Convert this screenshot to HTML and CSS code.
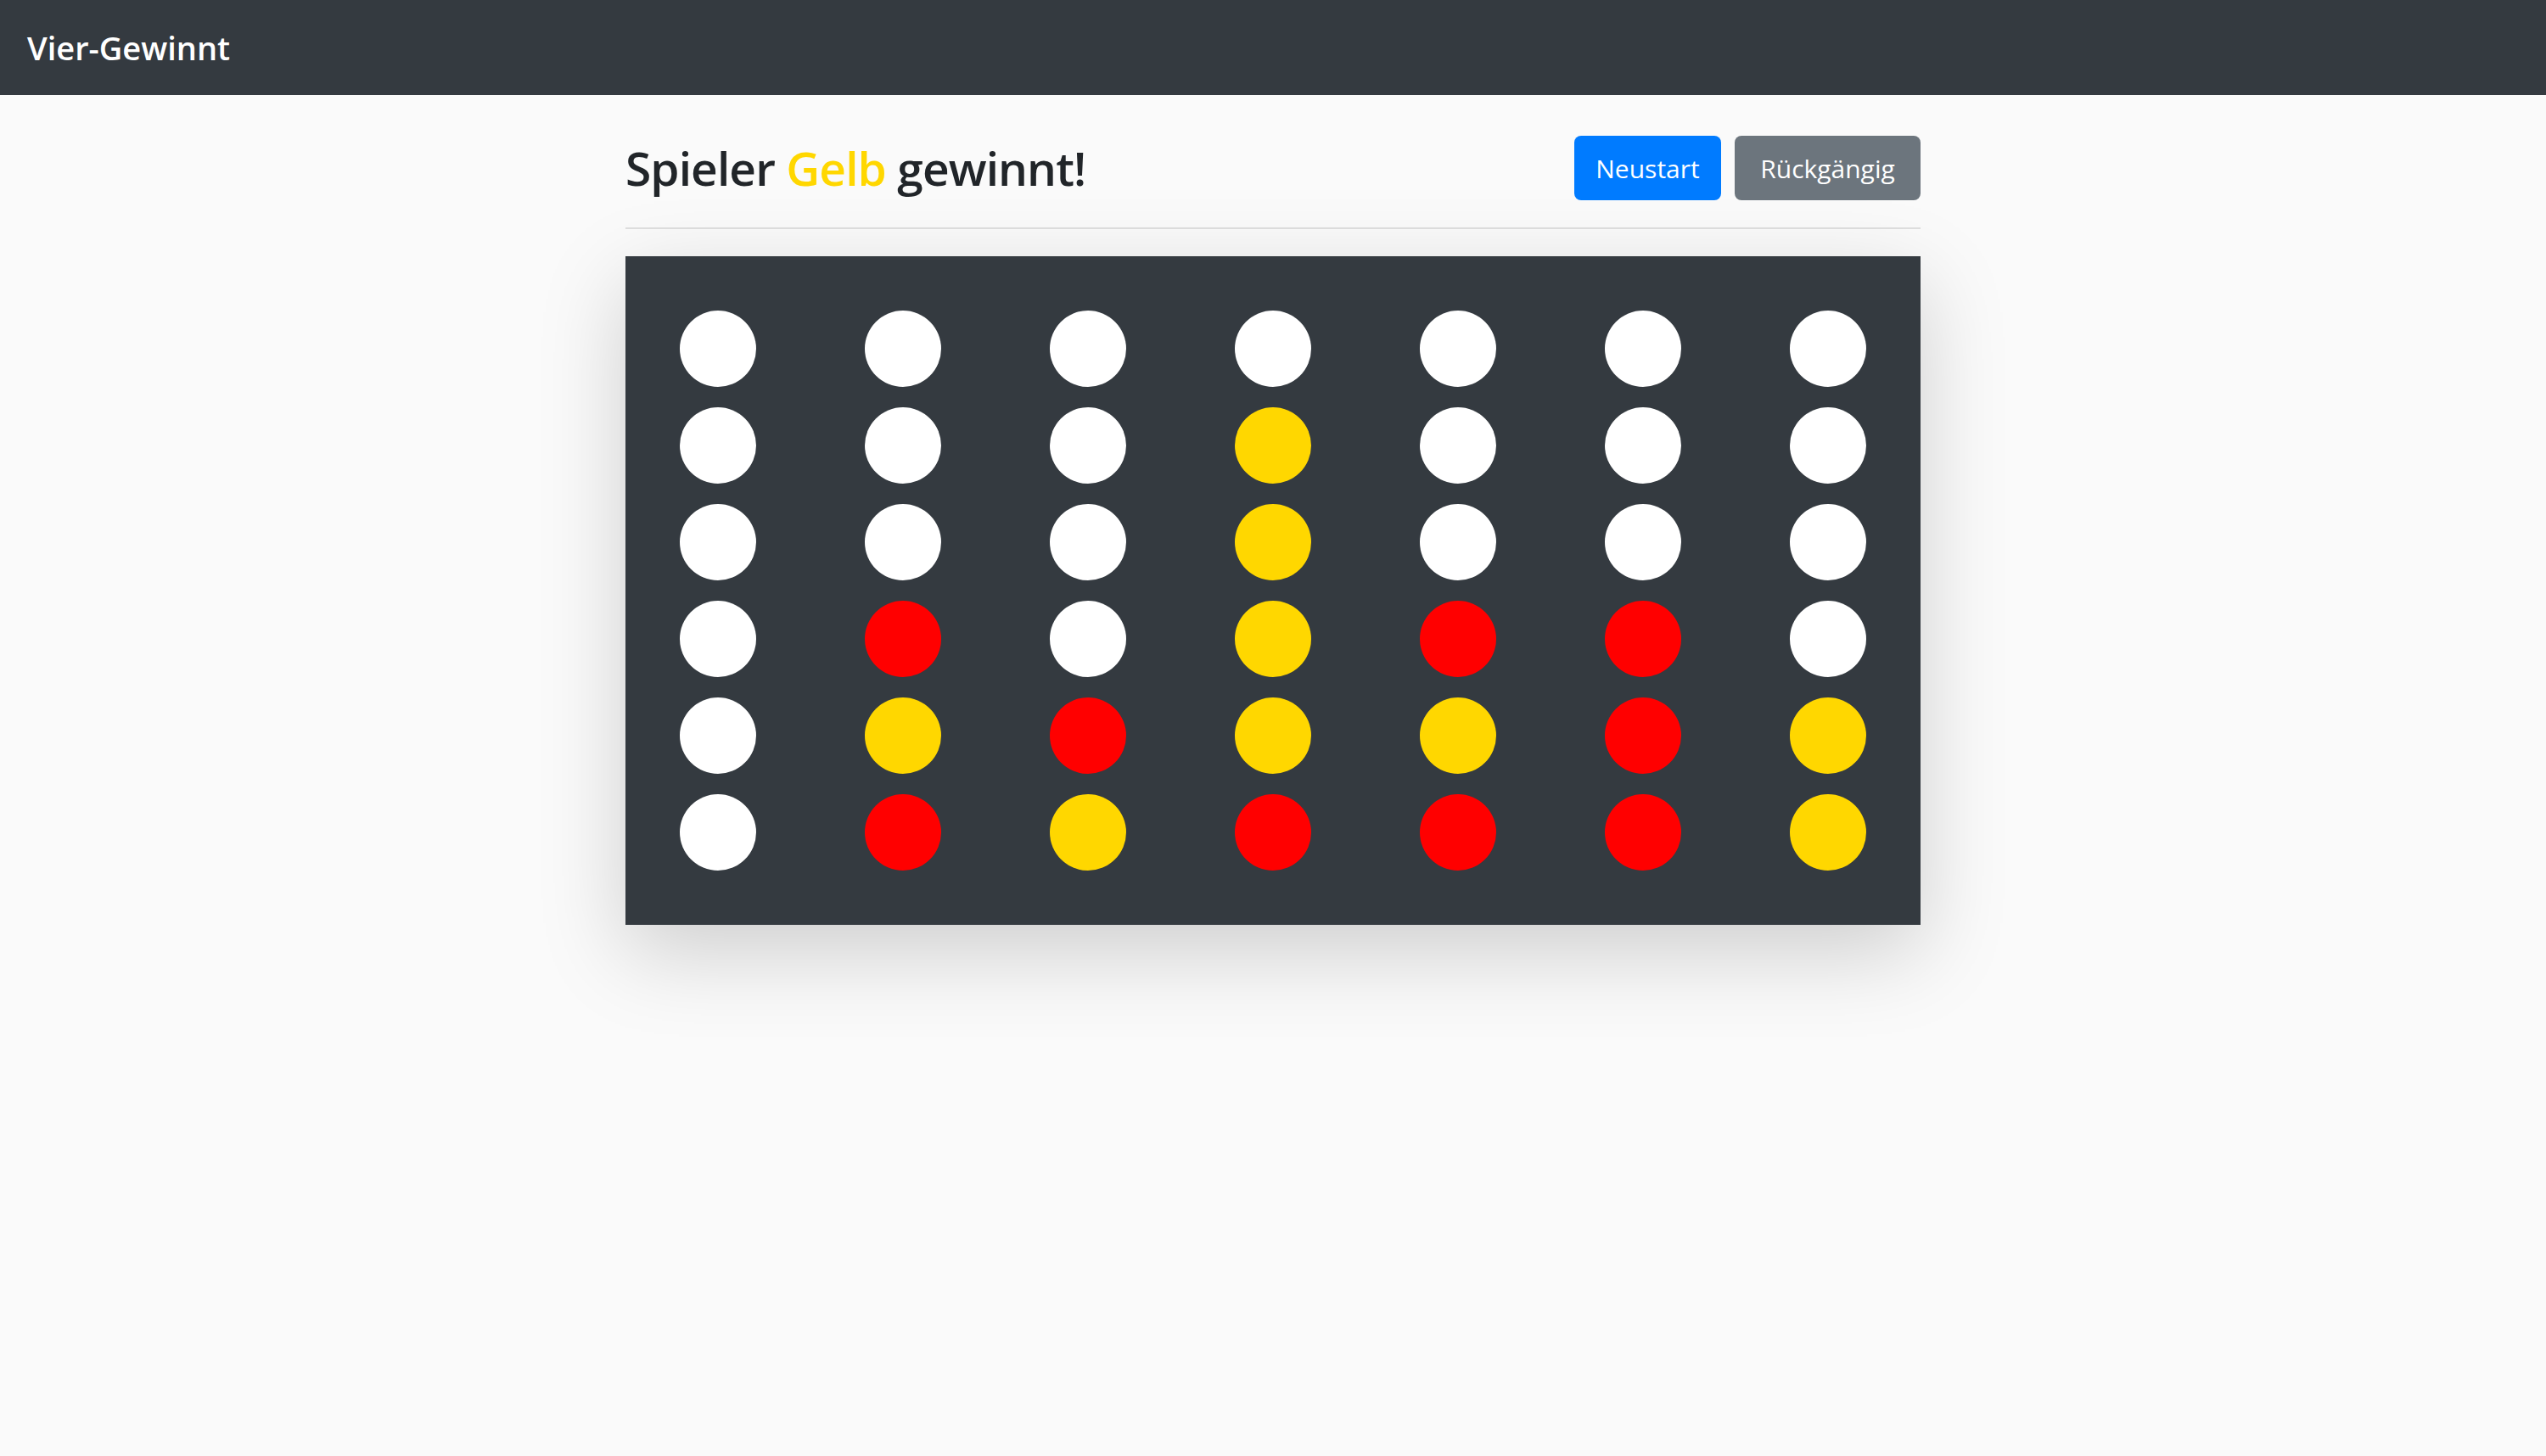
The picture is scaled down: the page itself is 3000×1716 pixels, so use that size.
FILE: index.html
```html
<!DOCTYPE html>
<html lang="de">
<head>
<meta charset="utf-8">
<title>Vier-Gewinnt</title>
<link rel="stylesheet" href="styles.css">
</head>
<body>
<nav class="navbar">
  <span class="brand">Vier-Gewinnt</span>
</nav>
<main class="container">
  <header class="game-header">
    <h2 class="status">Spieler <span class="yellow-text">Gelb</span> gewinnt!</h2>
    <div class="actions">
      <button class="btn btn-primary">Neustart</button>
      <button class="btn btn-secondary">Rückgängig</button>
    </div>
  </header>
  <div class="board">
    <div class="cell"><span class="disc empty"></span></div>
    <div class="cell"><span class="disc empty"></span></div>
    <div class="cell"><span class="disc empty"></span></div>
    <div class="cell"><span class="disc empty"></span></div>
    <div class="cell"><span class="disc empty"></span></div>
    <div class="cell"><span class="disc empty"></span></div>
    <div class="cell"><span class="disc empty"></span></div>

    <div class="cell"><span class="disc empty"></span></div>
    <div class="cell"><span class="disc empty"></span></div>
    <div class="cell"><span class="disc empty"></span></div>
    <div class="cell"><span class="disc yellow"></span></div>
    <div class="cell"><span class="disc empty"></span></div>
    <div class="cell"><span class="disc empty"></span></div>
    <div class="cell"><span class="disc empty"></span></div>

    <div class="cell"><span class="disc empty"></span></div>
    <div class="cell"><span class="disc empty"></span></div>
    <div class="cell"><span class="disc empty"></span></div>
    <div class="cell"><span class="disc yellow"></span></div>
    <div class="cell"><span class="disc empty"></span></div>
    <div class="cell"><span class="disc empty"></span></div>
    <div class="cell"><span class="disc empty"></span></div>

    <div class="cell"><span class="disc empty"></span></div>
    <div class="cell"><span class="disc red"></span></div>
    <div class="cell"><span class="disc empty"></span></div>
    <div class="cell"><span class="disc yellow"></span></div>
    <div class="cell"><span class="disc red"></span></div>
    <div class="cell"><span class="disc red"></span></div>
    <div class="cell"><span class="disc empty"></span></div>

    <div class="cell"><span class="disc empty"></span></div>
    <div class="cell"><span class="disc yellow"></span></div>
    <div class="cell"><span class="disc red"></span></div>
    <div class="cell"><span class="disc yellow"></span></div>
    <div class="cell"><span class="disc yellow"></span></div>
    <div class="cell"><span class="disc red"></span></div>
    <div class="cell"><span class="disc yellow"></span></div>

    <div class="cell"><span class="disc empty"></span></div>
    <div class="cell"><span class="disc red"></span></div>
    <div class="cell"><span class="disc yellow"></span></div>
    <div class="cell"><span class="disc red"></span></div>
    <div class="cell"><span class="disc red"></span></div>
    <div class="cell"><span class="disc red"></span></div>
    <div class="cell"><span class="disc yellow"></span></div>
  </div>
</main>
</body>
</html>
```

FILE: styles.css
```css
html, body {
  margin: 0;
  padding: 0;
}

html {
  background: #fafafa;
}

body {
  min-height: 100vh;
  background: #fafafa;
  color: #212529;
  font-family: "Open Sans", "Noto Sans", "Liberation Sans", sans-serif;
}

.navbar {
  height: 112px;
  background: #343a40;
  display: flex;
  align-items: center;
  padding: 0 32px;
}

.brand {
  color: #fff;
  font-size: 38px;
  font-weight: 600;
  line-height: 1;
}

.container {
  width: 1526px;
  margin: 0 auto;
  padding-top: 48px;
  padding-bottom: 200px;
}

.game-header {
  display: flex;
  justify-content: space-between;
  align-items: center;
  padding-bottom: 32px;
  border-bottom: 2px solid #dfdfdf;
}

.status {
  margin: 0;
  font-size: 55px;
  font-weight: 600;
  letter-spacing: -0.9px;
  line-height: 72px;
  color: #212529;
}

.yellow-text {
  color: #ffd700;
}

.actions {
  display: flex;
  gap: 16px;
}

.btn {
  height: 76px;
  padding: 0 24px;
  border: none;
  border-radius: 8px;
  font-family: inherit;
  font-size: 30px;
  color: #fff;
  cursor: pointer;
}

.btn-primary {
  background: #007bff;
  width: 173px;
}

.btn-secondary {
  background: #6c757d;
  width: 219px;
}

.board {
  margin-top: 32px;
  background: #343a40;
  padding: 52px 0;
  display: grid;
  grid-template-columns: repeat(7, 1fr);
  grid-auto-rows: 114px;
  box-shadow: 0 32px 96px rgba(0, 0, 0, 0.175);
}

.cell {
  display: flex;
  align-items: center;
  justify-content: center;
}

.disc {
  width: 90px;
  height: 90px;
  border-radius: 50%;
}

.empty {
  background: #ffffff;
}

.yellow {
  background: #ffd700;
}

.red {
  background: #ff0000;
}
```
